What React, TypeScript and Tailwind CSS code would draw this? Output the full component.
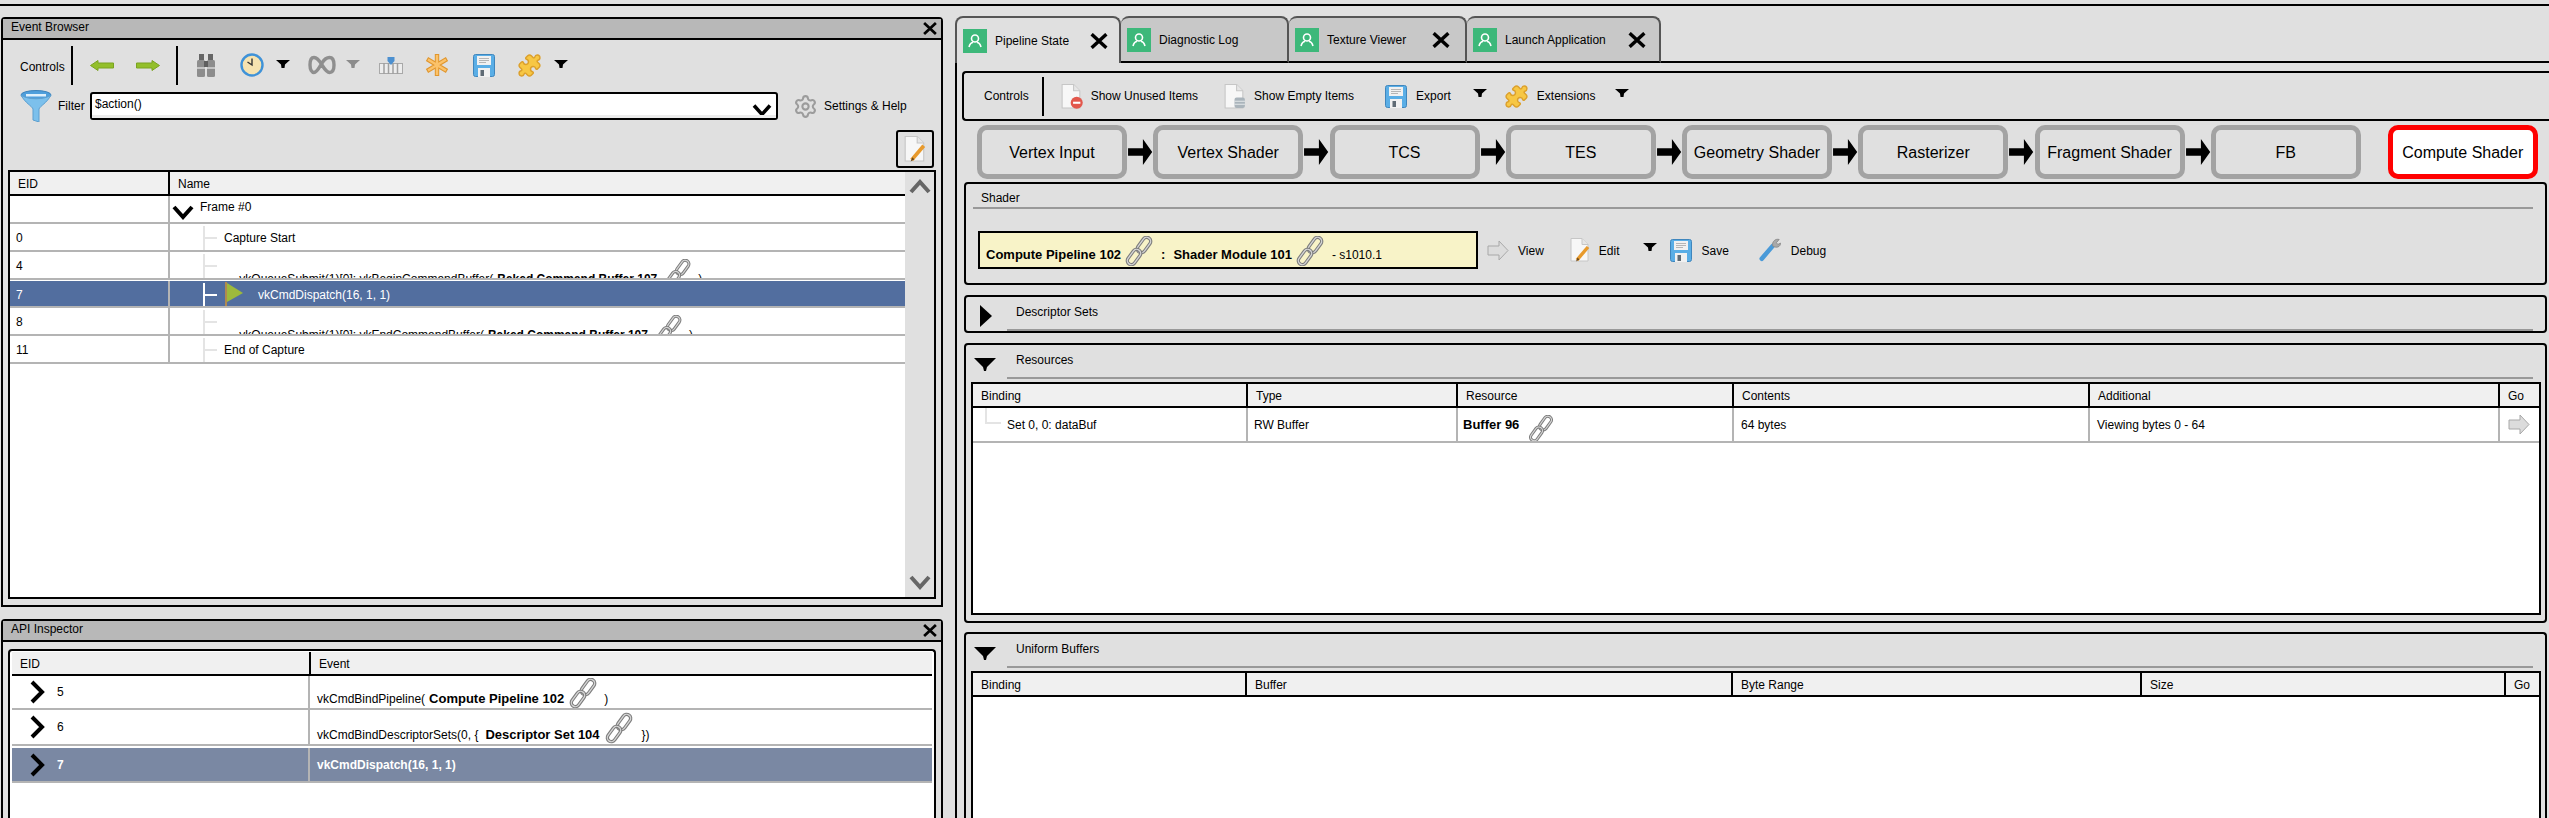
import { Puzzle, Settings } from 'lucide-react'
import type { ReactNode } from 'react'

function Link({ className = 'w-[28px] h-[30px]' }: { className?: string }) {
  return (
    <svg viewBox="0 0 28 30" className={`${className} flex-shrink-0`}>
      <g fill="none" strokeLinecap="round">
        <rect x="15" y="0.5" width="8" height="17" rx="4" transform="rotate(36 19 9)" stroke="#7c7c7c" strokeWidth="3.4" />
        <rect x="15" y="0.5" width="8" height="17" rx="4" transform="rotate(36 19 9)" stroke="#d6d6d6" strokeWidth="1.3" />
        <rect x="5" y="12.5" width="8" height="17" rx="4" transform="rotate(36 9 21)" stroke="#7c7c7c" strokeWidth="3.4" />
        <rect x="5" y="12.5" width="8" height="17" rx="4" transform="rotate(36 9 21)" stroke="#d6d6d6" strokeWidth="1.3" />
      </g>
    </svg>
  )
}

function Drop({ className = '', color = '#000' }: { className?: string; color?: string }) {
  return (
    <svg viewBox="0 0 14 8" className={`w-[14px] h-[8px] flex-shrink-0 ${className}`}>
      <polygon points="0,0 14,0 9,4.5 8.5,8 5.5,8 5,4.5" fill={color} />
    </svg>
  )
}

function CloseX({ className = 'w-[19px] h-[15px]' }: { className?: string }) {
  return (
    <svg viewBox="0 0 19 15" className={`${className} flex-shrink-0`}>
      <path d="M2.5 1 L16.5 14 M16.5 1 L2.5 14" stroke="#000" strokeWidth="3.2" />
    </svg>
  )
}

function Chevron({ dir, className, color = '#000' }: { dir: 'down' | 'up' | 'right'; className: string; color?: string }) {
  const d = dir === 'down' ? 'M2 4 L11 14 L20 4' : dir === 'up' ? 'M2 14 L11 4 L20 14' : 'M4 2 L14 12 L4 22'
  return (
    <svg viewBox={dir === 'right' ? '0 0 18 24' : '0 0 22 18'} className={`${className} flex-shrink-0`}>
      <path d={d} fill="none" stroke={color} strokeWidth="4" />
    </svg>
  )
}

function SaveIcon({ className = 'w-[22px] h-[23px]' }: { className?: string }) {
  return (
    <svg viewBox="0 0 22 23" className={`${className} flex-shrink-0`}>
      <rect x="0.5" y="0.5" width="21" height="22" rx="2" fill="#5aaee6" stroke="#3f86bd" />
      <rect x="4" y="2" width="14" height="9" fill="#f1f1f1" />
      <path d="M6 4.5h10M6 6.5h10M6 8.5h7" stroke="#b5b5b5" />
      <rect x="5" y="14" width="12" height="9" fill="#f1f1f1" />
      <rect x="7.5" y="16" width="3.5" height="6" fill="#5f6b75" />
    </svg>
  )
}

function PuzzleIcon({ className = 'ml-0' }: { className?: string }) {
  return <Puzzle className={`w-[25px] h-[25px] flex-shrink-0 ${className}`} fill="#f7c744" stroke="#dca02c" strokeWidth={1.4} />
}

function PageShape({ children, className = 'w-[22px] h-[24px]' }: { children?: ReactNode; className?: string }) {
  return (
    <svg viewBox="0 0 22 24" className={`${className} flex-shrink-0`}>
      <path d="M2 .5 H13 L19 6.5 V23 H2 Z" fill="#f7f7f7" stroke="#c6c6c6" />
      <path d="M13 .5 V6.5 H19" fill="#e6e6e6" stroke="#c6c6c6" />
      {children}
    </svg>
  )
}

function EditIcon({ className }: { className?: string }) {
  return (
    <PageShape className={className}>
      <path d="M8 22 L19 9" stroke="#e89a2c" strokeWidth="3.4" />
      <path d="M7 23.5 L8.5 19.5 L10.5 21.5 Z" fill="#6b4a1e" />
    </PageShape>
  )
}

function ArrowGray({ className = 'w-[22px] h-[21px]' }: { className?: string }) {
  return (
    <svg viewBox="0 0 22 21" className={`${className} flex-shrink-0`}>
      <path d="M1 6 H12 V1 L21 10.5 L12 20 V15 H1 Z" fill="#dcdcdc" stroke="#a8a8a8" />
    </svg>
  )
}

function GreenArrow({ left }: { left?: boolean }) {
  return (
    <svg viewBox="0 0 24 11" className={`w-[24px] h-[11px] flex-shrink-0 ${left ? '-scale-x-100' : ''}`}>
      <path d="M0.5 3 H16 V0.5 L23.5 5.5 L16 10.5 V8 H0.5 Z" fill="#93bf2a" stroke="#7aa320" />
    </svg>
  )
}

function Binoculars() {
  return (
    <svg viewBox="0 0 20 23" className="w-[20px] h-[23px] flex-shrink-0">
      <rect x="3" y="0" width="5" height="6" fill="#666" />
      <rect x="12" y="0" width="5" height="6" fill="#666" />
      <rect x="1" y="6" width="8" height="17" rx="1.5" fill="#8d8d8d" />
      <rect x="11" y="6" width="8" height="17" rx="1.5" fill="#8d8d8d" />
      <rect x="8" y="7" width="4" height="6" fill="#5f5f5f" />
      <path d="M1 14h8M11 14h8" stroke="#c4c4c4" strokeWidth="2" />
    </svg>
  )
}

function ClockIcon() {
  return (
    <svg viewBox="0 0 24 24" className="w-[24px] h-[24px] flex-shrink-0">
      <circle cx="12" cy="12" r="10.5" fill="#f6e3b0" stroke="#3f92d8" strokeWidth="2.4" />
      <path d="M12 5.5 V12 L7.5 9" fill="none" stroke="#333" strokeWidth="1.4" />
    </svg>
  )
}

function InfinityIcon() {
  return (
    <svg viewBox="0 0 28 20" className="w-[28px] h-[20px] flex-shrink-0">
      <path d="M14 10 C10 3 8 2.5 6 2.5 C3.5 2.5 2 5.5 2 10 C2 15 4 17.5 6 17.5 C9 17.5 11.5 12 14 8 C17 3 19 2.5 21.5 2.5 C24.5 2.5 26 5.5 26 10 C26 15 24 17.5 21.5 17.5 C19 17.5 16.5 14 14 10 Z" fill="none" stroke="#8f8f8f" strokeWidth="3.4" />
    </svg>
  )
}

function TicksIcon() {
  return (
    <svg viewBox="0 0 24 17" className="w-[24px] h-[17px] flex-shrink-0">
      <rect x="0.5" y="6.5" width="23" height="10" fill="#ededed" stroke="#a9a9a9" />
      <path d="M5 6v11M9.5 6v11M14 6v11M18.5 6v11" stroke="#a0a0a0" strokeWidth="1.5" />
      <path d="M8.5 0 H15.5 V4 L12 8 L8.5 4 Z" fill="#4c90d0" />
    </svg>
  )
}

function AsteriskIcon() {
  return (
    <svg viewBox="0 0 24 24" className="w-[24px] h-[24px] flex-shrink-0">
      <path d="M12 1 V23 M2 6 L22 18 M22 6 L2 18" stroke="#e0962e" strokeWidth="4.4" />
      <path d="M12 2 V22 M3 6.5 L21 17.5 M21 6.5 L3 17.5" stroke="#fbc26a" strokeWidth="2.4" />
    </svg>
  )
}

function Funnel() {
  return (
    <svg viewBox="0 0 32 32" className="w-[32px] h-[32px] flex-shrink-0">
      <ellipse cx="16" cy="5" rx="15" ry="4.5" fill="#4f9fdc" stroke="#3c82bb" />
      <path d="M1 5 C5 13 12 16 13 19 V30 L19 32 V19 C20 16 27 13 31 5 C25 10 7 10 1 5 Z" fill="#7cc0ec" stroke="#5c9fd0" />
      <rect x="6" y="4" width="20" height="2.5" fill="#dff0fb" />
    </svg>
  )
}

function MiniPage({ kind }: { kind: 'unused' | 'empty' }) {
  return (
    <PageShape className="w-[23px] h-[25px]">
      {kind === 'unused' ? (
        <>
          <circle cx="16" cy="18" r="5.8" fill="#e2574c" />
          <rect x="12.5" y="17" width="7" height="2" fill="#fff" />
        </>
      ) : (
        <>
          <rect x="11" y="13" width="10" height="10" rx="2" fill="#aab4bb" />
          <path d="M11 16.5h10M11 19.5h10" stroke="#e4e8ea" />
        </>
      )}
    </PageShape>
  )
}

function Wrench() {
  return (
    <svg viewBox="0 0 24 25" className="w-[22px] h-[24px] flex-shrink-0">
      <path d="M3 22 L15 8" stroke="#4a9ad8" strokeWidth="5" strokeLinecap="round" />
      <path d="M15 8 C14 3 18 0 22 1 L19 4.5 L20.5 6.5 L23.5 5 C23.5 9 19 11 15 8 Z" fill="#a9a9a9" stroke="#8a8a8a" />
    </svg>
  )
}

function TabIcon() {
  return (
    <span className="w-[24px] h-[24px] bg-[#3db87a] flex items-center justify-center flex-shrink-0">
      <svg viewBox="0 0 16 16" className="w-[16px] h-[16px]">
        <circle cx="8" cy="5.5" r="3.5" fill="none" stroke="#fff" strokeWidth="1.6" />
        <path d="M2 14 C3 10.5 5 9.5 6 9.5 M14 14 C13 10.5 11 9.5 10 9.5" fill="none" stroke="#fff" strokeWidth="1.6" />
      </svg>
    </span>
  )
}

function Tab({ label, width, active, close, textWidth }: { label: string; width: string; active?: boolean; close?: boolean; textWidth: string }) {
  return (
    <div className={`${width} h-[47px] flex items-center pl-[6px] border-2 rounded-t-lg ${active ? 'bg-[#e0e0e0] border-[#555] border-b-0' : 'bg-[#c8c8c8] border-[#555] border-b-black border-l-0'}`}>
      <TabIcon />
      <span className={`ml-[8px] ${textWidth} whitespace-nowrap`}>{label}</span>
      {close && <CloseX className="w-[20px] h-[16px]" />}
    </div>
  )
}

function PanelTitle({ title }: { title: string }) {
  return (
    <div className="h-[21px] bg-[#b8b8b8] border-b-2 border-black flex items-center justify-between pl-[8px] pr-[3px] flex-shrink-0">
      <span className="leading-[14px] -mt-[3px]">{title}</span>
      <CloseX className="w-[16px] h-[15px]" />
    </div>
  )
}

function TreeStub({ white }: { white?: boolean }) {
  return (
    <div className={`ml-[33px] w-[14px] h-full flex-shrink-0 flex items-center border-l-2 ${white ? 'border-white' : 'border-[#e4e4e4]'}`}>
      <div className={`w-full h-[2px] ${white ? 'bg-white' : 'bg-[#e4e4e4]'}`} />
    </div>
  )
}

function EventRow({ eid, children, selected }: { eid?: string; children: ReactNode; selected?: boolean }) {
  return (
    <div className={`h-[28px] flex overflow-hidden border-b-2 border-[#b4b4b4] ${selected ? 'bg-[#526e9f] text-white border-t border-t-white' : ''}`}>
      <div className="w-[160px] flex-shrink-0 border-r-2 border-[#b4b4b4] flex items-center pl-[6px] pt-[2px]">{eid}</div>
      <div className="flex-1 flex items-center min-w-0 h-full pt-[2px]">{children}</div>
    </div>
  )
}

function ClippedCall({ name, target, linkLeft }: { name: string; target: string; linkLeft: string }) {
  return (
    <div className="flex items-start h-full">
      <TreeStub />
      <div className="ml-[7px] mt-[16px] flex items-start whitespace-nowrap">
        <span>→ {name}( </span>
        <b className="ml-[4px]">{target}</b>
        <Link className={`w-[30px] h-[28px] -mt-[11px] ${linkLeft}`} />
        <span className="ml-[5px]">)</span>
      </div>
    </div>
  )
}

function Step({ label, active }: { label: string; active?: boolean }) {
  return (
    <div className={`w-[150px] h-[54px] flex-shrink-0 rounded-[10px] border-[5px] flex items-center justify-center text-[16px] pt-[1px] ${active ? 'border-[#f00] bg-white' : 'border-[#a3a3a3]'}`}>
      {label}
    </div>
  )
}

function StepArrow() {
  return (
    <svg viewBox="0 0 26 28" className="w-[26.25px] h-[26px] flex-shrink-0">
      <path d="M0 10 H16 V0 L26 14 L16 28 V18 H0 Z" fill="#000" />
    </svg>
  )
}

function GroupTitle({ title, open }: { title: string; open: boolean }) {
  return (
    <div className="flex h-[34px] flex-shrink-0">
      <div className="w-[41px] flex-shrink-0 flex items-center">
        {open ? (
          <svg viewBox="0 0 22 13" className="w-[22px] h-[13px] ml-[8px] mt-[4px]">
            <polygon points="0,0 22,0 13,9 12,13 10,13 9,9" fill="#000" />
          </svg>
        ) : (
          <svg viewBox="0 0 12 22" className="w-[12px] h-[22px] ml-[14px] mt-[4px]">
            <polygon points="0,0 12,11 0,22" fill="#000" />
          </svg>
        )}
      </div>
      <div className="flex-1 mr-[12px] border-b-2 border-[#999] pl-[9px] pt-[7px] leading-[16px]">{title}</div>
    </div>
  )
}

function HeadCell({ label, last }: { label: string; last?: boolean }) {
  return (
    <div className={`h-full flex items-center pl-[8px] pt-[1px] ${last ? '' : 'border-r-2 border-black'}`}>{label}</div>
  )
}

export default function App() {
  return (
    <div
      className="w-[2549px] h-[818px] overflow-hidden bg-[#e0e0e0] text-black text-[12px] flex flex-col"
      style={{ fontFamily: '"Liberation Sans", Arial, sans-serif' }}
    >
      <div className="h-[6px] border-b-2 border-black flex-shrink-0" />
      <div className="flex flex-1 min-h-0">
        {/* Left column */}
        <div className="w-[943px] flex-shrink-0 pl-[1px] pt-[11px] flex flex-col">
          <div className="h-[590px] flex flex-col border-2 border-black rounded-t-sm flex-shrink-0">
            <PanelTitle title="Event Browser" />
            <div className="h-[48px] flex items-center pl-[17px] pt-[2px] flex-shrink-0">
              <span className="mt-[3px]">Controls</span>
              <div className="w-[2px] h-[39px] bg-black ml-[6px]" />
              <div className="ml-[17px]"><GreenArrow left /></div>
              <div className="ml-[22px]"><GreenArrow /></div>
              <div className="w-[2px] h-[39px] bg-black ml-[16px]" />
              <div className="ml-[18px]"><Binoculars /></div>
              <div className="ml-[24px]"><ClockIcon /></div>
              <Drop className="ml-[12px] -mt-[3px]" />
              <div className="ml-[18px]"><InfinityIcon /></div>
              <Drop className="ml-[10px] -mt-[3px]" color="#8c8c8c" />
              <div className="ml-[19px]"><TicksIcon /></div>
              <div className="ml-[22px]"><AsteriskIcon /></div>
              <div className="ml-[24px]"><SaveIcon /></div>
              <PuzzleIcon className="ml-[22px]" />
              <Drop className="ml-[12px] -mt-[3px]" />
            </div>
            <div className="h-[28px] mt-[4px] flex items-center pl-[17px] flex-shrink-0">
              <Funnel />
              <span className="ml-[6px] w-[32px]">Filter</span>
              <div className="w-[688px] h-[28px] border-2 border-black rounded-[3px] bg-white flex justify-between relative">
                <span className="pl-[3px] leading-[20px] h-[20px]">$action()</span>
                <Chevron dir="down" className="w-[22px] h-[16px] mt-[8px] mr-[3px]" />
                <div className="absolute left-0 right-0 bottom-0 h-[3px] bg-[#ececec] -z-0" />
              </div>
              <Settings className="w-[25px] h-[25px] ml-[15px] text-[#9c9c9c] flex-shrink-0" strokeWidth={2} />
              <span className="ml-[6px] whitespace-nowrap">Settings &amp; Help</span>
            </div>
            <div className="flex justify-end pr-[7px] mt-[10px] flex-shrink-0">
              <div className="w-[38px] h-[38px] border-2 border-black rounded-[3px] flex items-center justify-center">
                <EditIcon className="w-[24px] h-[28px]" />
              </div>
            </div>
            <div className="flex-1 mt-[2px] mb-[6px] ml-[5px] w-[928px] border-2 border-black flex bg-white min-h-0">
              <div className="flex-1 min-w-0">
                <div className="h-[24px] bg-[#f0f0f0] border-b-2 border-black flex">
                  <div className="w-[160px] border-r-2 border-black flex items-center pl-[8px] pt-[1px]">EID</div>
                  <div className="flex-1 flex items-center pl-[8px] pt-[1px]">Name</div>
                </div>
                <EventRow>
                  <div className="flex items-center">
                    <Chevron dir="down" className="w-[22px] h-[18px] ml-[2px] mt-[4px]" />
                    <span className="ml-[6px] -mt-[6px]">Frame #0</span>
                  </div>
                </EventRow>
                <EventRow eid="0">
                  <TreeStub />
                  <span className="ml-[7px]">Capture Start</span>
                </EventRow>
                <EventRow eid="4">
                  <ClippedCall name="vkQueueSubmit(1)[0]: vkBeginCommandBuffer" target="Baked Command Buffer 107" linkLeft="ml-[6px]" />
                </EventRow>
                <EventRow eid="7" selected>
                  <TreeStub white />
                  <svg viewBox="0 0 18 25" className="w-[18px] h-[25px] ml-[8px] flex-shrink-0">
                    <rect x="0" y="0" width="2" height="25" fill="#b08a50" />
                    <polygon points="2,1 18,11 2,20" fill="#9db93c" />
                  </svg>
                  <span className="ml-[15px]">vkCmdDispatch(16, 1, 1)</span>
                </EventRow>
                <EventRow eid="8">
                  <ClippedCall name="vkQueueSubmit(1)[0]: vkEndCommandBuffer" target="Baked Command Buffer 107" linkLeft="ml-[6px]" />
                </EventRow>
                <EventRow eid="11">
                  <TreeStub />
                  <span className="ml-[7px]">End of Capture</span>
                </EventRow>
              </div>
              <div className="w-[29px] flex-shrink-0 bg-[#e0e0e0] flex flex-col justify-between items-center py-[6px]">
                <Chevron dir="up" color="#666" className="w-[24px] h-[18px]" />
                <Chevron dir="down" color="#666" className="w-[24px] h-[18px]" />
              </div>
            </div>
          </div>

          <div className="mt-[12px] flex-1 flex flex-col border-2 border-b-0 border-black rounded-t-sm min-h-0">
            <PanelTitle title="API Inspector" />
            <div className="flex-1 mt-[7px] ml-[5px] w-[928px] border-2 border-b-0 border-black rounded-t-sm bg-white px-[2px] pt-[1px] min-h-0">
              <div className="h-[24px] bg-[#f0f0f0] border-b-2 border-black flex">
                <div className="w-[299px] border-r-2 border-black flex items-center pl-[8px] pt-[1px]">EID</div>
                <div className="flex-1 flex items-center pl-[8px] pt-[1px]">Event</div>
              </div>
              {[
                { h: 'h-[34px]', eid: '5' },
                { h: 'h-[36px]', eid: '6' },
                { h: 'h-[37px]', eid: '7' },
              ].map((r) => (
                <div key={r.eid} className={`${r.h} flex border-b-2 border-[#b4b4b4] ${r.eid === '7' ? 'bg-[#7a88a3] text-white border-t-2 border-t-white' : ''}`}>
                  <div className="w-[298px] flex-shrink-0 border-r-2 border-[#b4b4b4] flex items-center">
                    <Chevron dir="right" className="w-[18px] h-[26px] ml-[16px]" />
                    <span className={`ml-[11px] ${r.eid === '7' ? 'font-bold' : ''}`}>{r.eid}</span>
                  </div>
                  <div className="flex-1 flex items-end pl-[7px] whitespace-nowrap overflow-hidden">
                    {r.eid === '5' && (
                      <>
                        <span>vkCmdBindPipeline(</span>
                        <b className="ml-[4px] text-[13px]">Compute Pipeline 102</b>
                        <Link className="ml-[5px] w-[28px] h-[30px]" />
                        <span className="ml-[7px]">)</span>
                      </>
                    )}
                    {r.eid === '6' && (
                      <>
                        <span>vkCmdBindDescriptorSets(0, {'{'}</span>
                        <b className="ml-[7px] text-[13px]">Descriptor Set 104</b>
                        <Link className="ml-[5px] w-[28px] h-[32px]" />
                        <span className="ml-[9px]">{'})'}</span>
                      </>
                    )}
                    {r.eid === '7' && <span className="font-bold self-center">vkCmdDispatch(16, 1, 1)</span>}
                  </div>
                </div>
              ))}
            </div>
          </div>
        </div>

        {/* Right column */}
        <div className="flex-1 min-w-0 ml-[12px] flex flex-col">
          <div className="flex h-[47px] mt-[10px] flex-shrink-0 items-end">
            <Tab label="Pipeline State" width="w-[166px]" active close textWidth="w-[94px]" />
            <Tab label="Diagnostic Log" width="w-[168px]" textWidth="w-[120px]" />
            <Tab label="Texture Viewer" width="w-[178px]" close textWidth="w-[104px]" />
            <Tab label="Launch Application" width="w-[194px]" close textWidth="w-[122px]" />
            <div className="flex-1 border-b-2 border-black" />
          </div>
          <div className="flex-1 min-h-0 border-l-2 border-black flex flex-col">
            <div className="ml-[5px] mt-[8px] h-[50px] border-2 border-r-0 border-black rounded-l-sm flex items-center pl-[20px] flex-shrink-0">
              <span>Controls</span>
              <div className="w-[2px] h-[39px] bg-black ml-[13px]" />
              <div className="ml-[16px]"><MiniPage kind="unused" /></div>
              <span className="ml-[8px]">Show Unused Items</span>
              <div className="ml-[25px]"><MiniPage kind="empty" /></div>
              <span className="ml-[8px]">Show Empty Items</span>
              <SaveIcon className="ml-[31px] w-[22px] h-[23px]" />
              <span className="ml-[9px]">Export</span>
              <Drop className="ml-[22px] -mt-[6px]" />
              <PuzzleIcon className="ml-[17px]" />
              <span className="ml-[8px]">Extensions</span>
              <Drop className="ml-[19px] -mt-[6px]" />
            </div>

            <div className="flex items-center pl-[20px] mt-[4px] flex-shrink-0">
              {['Vertex Input', 'Vertex Shader', 'TCS', 'TES', 'Geometry Shader', 'Rasterizer', 'Fragment Shader'].map((s) => (
                <div key={s} className="contents">
                  <Step label={s} />
                  <StepArrow />
                </div>
              ))}
              <Step label="FB" />
              <div className="w-[27px] flex-shrink-0" />
              <Step label="Compute Shader" active />
            </div>

            <div className="ml-[7px] mr-[2px] mt-[3px] h-[103px] border-2 border-black rounded-sm flex-shrink-0">
              <div className="ml-[7px] mr-[12px] h-[25px] border-b-2 border-[#999] pl-[8px] leading-[28px]">Shader</div>
              <div className="flex items-center ml-[12px] mt-[22px]">
                <div className="w-[500px] h-[38px] border-2 border-black bg-[#f8f3c8] flex items-end pl-[6px] pb-[1px] text-[13px] whitespace-nowrap">
                  <b className="mb-[2px]">Compute Pipeline 102</b>
                  <Link className="ml-[4px] w-[28px] h-[30px]" />
                  <b className="ml-[8px] mb-[2px]">:</b>
                  <b className="ml-[8px] mb-[2px]">Shader Module 101</b>
                  <Link className="ml-[4px] w-[28px] h-[30px]" />
                  <span className="ml-[8px] mb-[2px] text-[12px]">- s1010.1</span>
                </div>
                <ArrowGray className="ml-[9px] w-[22px] h-[21px]" />
                <span className="ml-[9px] mt-[2px]">View</span>
                <EditIcon className="ml-[25px] w-[22px] h-[26px]" />
                <span className="ml-[8px] mt-[2px]">Edit</span>
                <Drop className="ml-[24px] -mt-[6px]" />
                <SaveIcon className="ml-[13px] w-[22px] h-[23px]" />
                <span className="ml-[9px] mt-[2px]">Save</span>
                <div className="ml-[30px]"><Wrench /></div>
                <span className="ml-[10px] mt-[2px]">Debug</span>
              </div>
            </div>

            <div className="ml-[7px] mr-[2px] mt-[10px] h-[38px] border-2 border-black rounded-sm flex-shrink-0">
              <GroupTitle title="Descriptor Sets" open={false} />
            </div>

            <div className="ml-[7px] mr-[2px] mt-[10px] h-[280px] border-2 border-black rounded-sm flex flex-col flex-shrink-0">
              <GroupTitle title="Resources" open />
              <div className="flex-1 mt-[3px] mb-[6px] ml-[5px] mr-[4px] border-2 border-black bg-white min-h-0">
                <div className="h-[24px] grid grid-cols-[275px_210px_276px_356px_410px_39px] bg-[#f0f0f0] border-b-2 border-black">
                  {['Binding', 'Type', 'Resource', 'Contents', 'Additional', 'Go'].map((h) => (
                    <HeadCell key={h} label={h} last={h === 'Go'} />
                  ))}
                </div>
                <div className="h-[35px] grid grid-cols-[275px_210px_276px_356px_410px_39px] border-b-2 border-[#b4b4b4]">
                  <div className="flex border-r-2 border-[#b4b4b4] h-full">
                    <div className="ml-[12px] w-[16px] h-[16px] border-l-2 border-b-2 border-[#e4e4e4] flex-shrink-0" />
                    <span className="ml-[6px] self-center">Set 0, 0: dataBuf</span>
                  </div>
                  <div className="flex items-center pl-[6px] border-r-2 border-[#b4b4b4]">RW Buffer</div>
                  <div className="flex items-center pl-[5px] border-r-2 border-[#b4b4b4] overflow-hidden">
                    <b className="text-[13px]">Buffer 96</b>
                    <Link className="ml-[8px] w-[28px] h-[27px] mt-[7px]" />
                  </div>
                  <div className="flex items-center pl-[7px] border-r-2 border-[#b4b4b4]">64 bytes</div>
                  <div className="flex items-center pl-[7px] border-r-2 border-[#b4b4b4]">Viewing bytes 0 - 64</div>
                  <div className="flex items-center pl-[8px]"><ArrowGray /></div>
                </div>
              </div>
            </div>

            <div className="ml-[7px] mr-[2px] mt-[9px] flex-1 border-2 border-b-0 border-black rounded-t-sm flex flex-col min-h-0">
              <GroupTitle title="Uniform Buffers" open />
              <div className="flex-1 mt-[3px] ml-[5px] mr-[4px] border-2 border-b-0 border-black bg-white">
                <div className="h-[24px] grid grid-cols-[274px_486px_409px_364px_33px] bg-[#f0f0f0] border-b-2 border-black">
                  {['Binding', 'Buffer', 'Byte Range', 'Size', 'Go'].map((h) => (
                    <HeadCell key={h} label={h} last={h === 'Go'} />
                  ))}
                </div>
              </div>
            </div>
          </div>
        </div>
      </div>
    </div>
  )
}
